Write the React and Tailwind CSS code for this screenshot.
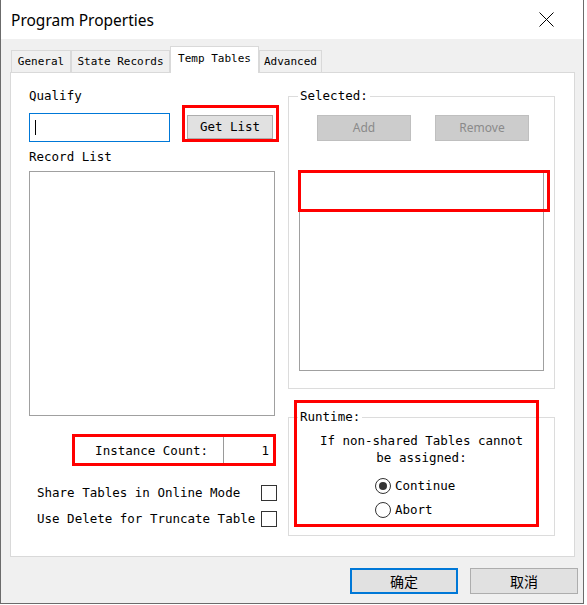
const mono = { fontFamily: '"DejaVu Sans Mono", "Liberation Mono", monospace' }

function Tab({ label, active, w }) {
  if (active) {
    return (
      <div
        className={`${w} relative z-10 flex h-[27px] items-start justify-center border-x border-t border-[#d9d9d9] bg-white pt-[4px] text-[11px] leading-[16px] text-black`}
      >
        {label}
      </div>
    )
  }
  return (
    <div
      className={`${w} flex h-[23px] items-center justify-center border border-b-0 border-[#d9d9d9] bg-[#f0f0f0] text-[11px] leading-[16px] text-black`}
    >
      {label}
    </div>
  )
}

function CheckRow({ label, className }) {
  return (
    <div className={`flex h-[16px] items-center justify-between pl-[8px] ${className}`}>
      <span className="text-[12.5px] leading-[16px]">{label}</span>
      <span className="block size-[16px] border border-[#333333] bg-white" />
    </div>
  )
}

function Radio({ label, checked, className }) {
  return (
    <div className={`flex h-[16px] items-center gap-[4px] ${className}`}>
      <span className="grid size-[16px] place-items-center rounded-full border border-[#333333] bg-white">
        {checked ? <span className="block size-[8px] rounded-full bg-[#333333]" /> : null}
      </span>
      <span className="text-[12.5px] leading-[16px]">{label}</span>
    </div>
  )
}

export default function App() {
  return (
    <div className="relative h-[605px] w-[587px] overflow-hidden bg-white" style={mono}>
      <div className="flex h-[604px] w-[584px] flex-col border-x border-b border-[#6b6b6b] bg-[#f0f0f0]">
        {/* title bar */}
        <div className="flex h-[39px] shrink-0 items-center justify-between bg-white pl-[10px] pr-[29px]">
          <span
            className="text-[15.5px] leading-[20px] text-black"
            style={{ fontFamily: '"Noto Sans", "Open Sans", sans-serif' }}
          >
            Program Properties
          </span>
          <svg width="15" height="15" viewBox="0 0 15 15" fill="none" stroke="#000" strokeWidth="1">
            <path d="M0.5 0.5L14.5 14.5M14.5 0.5L0.5 14.5" />
          </svg>
        </div>

        {/* tabs */}
        <div className="mt-[7px] flex h-[27px] items-end pl-[10px]">
          <Tab label="General" w="w-[60px]" />
          <Tab label="State Records" w="w-[99px]" />
          <Tab label="Temp Tables" w="w-[89px]" active />
          <Tab label="Advanced" w="w-[63px]" />
        </div>

        {/* panel */}
        <div className="-mt-px ml-[9px] mr-[8px] flex h-[485px] border border-[#d9d9d9] bg-white pl-[18px]">
          {/* left column */}
          <div className="flex w-[248px] flex-col pt-[15px]">
            <div className="text-[12.5px] leading-[16px]">Qualify</div>
            <div className="mt-[9px] flex items-start">
              <div className="flex h-[29px] w-[141px] items-center border border-[#0078d7] bg-white pl-[5px]">
                <span className="block h-[15px] w-px bg-black" />
              </div>
              <button
                type="button"
                className="ml-[17px] mt-[2px] flex h-[24px] w-[86px] items-center justify-center border border-[#adadad] bg-[#e1e1e1] text-[12.5px] leading-[16px] text-black"
                style={mono}
              >
                Get List
              </button>
            </div>
            <div className="mt-[7px] text-[12.5px] leading-[16px]">Record List</div>
            <div className="mt-[6px] h-[245px] w-[246px] border border-[#a0a0a0] bg-white" />

            <div className="mt-[21px] flex h-[27px] w-[245px] items-stretch justify-end">
              <span className="flex items-center pr-[15px] text-[12.5px] leading-[16px]">Instance Count:</span>
              <span className="flex w-[51px] items-center justify-end border-l border-[#9a9a9a] pr-[5px] text-[12.5px] leading-[16px]">
                1
              </span>
            </div>

            <CheckRow label="Share Tables in Online Mode" className="mt-[21px]" />
            <CheckRow label="Use Delete for Truncate Table" className="mt-[10px]" />
          </div>

          {/* right column */}
          <div className="ml-[11px] flex w-[267px] flex-col pt-[15px]">
            <fieldset className="h-[301px] border border-[#dcdcdc]">
              <legend className="ml-[9px] px-[2px] text-[12.5px] leading-[16px]">Selected:</legend>
              <div className="mt-[11px] flex gap-[24px] pl-[28px]">
                {['Add', 'Remove'].map((t) => (
                  <button
                    key={t}
                    type="button"
                    className="flex h-[26px] w-[94px] items-center justify-center border border-[#bfbfbf] bg-[#cccccc] text-[12px] leading-[16px] text-[#8a8a8a]"
                    style={{ fontFamily: '"Noto Sans", "Open Sans", sans-serif' }}
                  >
                    {t}
                  </button>
                ))}
              </div>
              <div className="ml-[10px] mt-[31px] h-[199px] w-[245px] border border-[#a0a0a0] bg-white" />
            </fieldset>

            <fieldset className="mt-[20px] h-[127px] border border-[#dcdcdc]">
              <legend className="ml-[9px] px-[2px] text-[12.5px] leading-[16px]">Runtime:</legend>
              <div className="mt-[7px] text-center text-[12.5px] leading-[17px]">
                If non-shared Tables cannot
                <br />
                be assigned:
              </div>
              <Radio label="Continue" checked className="ml-[86px] mt-[12px]" />
              <Radio label="Abort" className="ml-[86px] mt-[8px]" />
            </fieldset>
          </div>
        </div>

        {/* dialog buttons */}
        <div
          className="mt-[11px] flex justify-end gap-[12px] pr-[5px]"
          style={{ fontFamily: '"Noto Sans CJK SC", "Noto Sans", sans-serif' }}
        >
          <button
            type="button"
            className="flex h-[26px] w-[108px] items-center justify-center border-2 border-[#0078d7] bg-[#e1e1e1] text-[14px] leading-[18px] text-black"
          >
            确定
          </button>
          <button
            type="button"
            className="flex h-[26px] w-[108px] items-center justify-center border border-[#adadad] bg-[#e1e1e1] text-[14px] leading-[18px] text-black"
          >
            取消
          </button>
        </div>
      </div>

      {/* red annotation boxes */}
      <div className="pointer-events-none absolute left-[182px] top-[105px] h-[37px] w-[97px] border-[3px] border-[#ff0000]" />
      <div className="pointer-events-none absolute left-[298px] top-[170px] h-[42px] w-[252px] border-[3px] border-[#ff0000]" />
      <div className="pointer-events-none absolute left-[72px] top-[434px] h-[32px] w-[204px] border-[3px] border-[#ff0000]" />
      <div className="pointer-events-none absolute left-[294px] top-[400px] h-[127px] w-[245px] border-[3px] border-[#ff0000]" />
    </div>
  )
}
